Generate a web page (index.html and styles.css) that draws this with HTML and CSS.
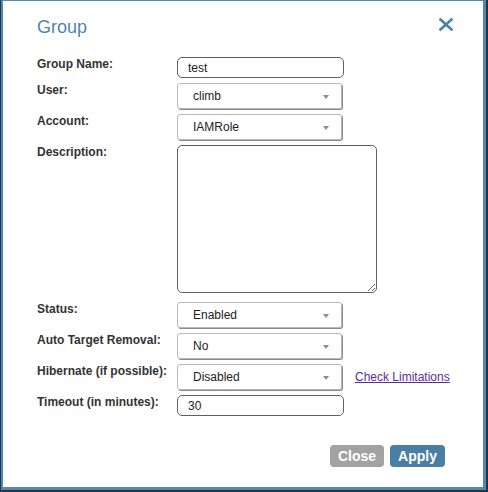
FILE: index.html
```html
<!DOCTYPE html>
<html>
<head>
<meta charset="utf-8">
<link rel="stylesheet" href="styles.css">
</head>
<body>
<div class="dialog">
  <div class="header">
    <h1 class="title">Group</h1>
    <span class="close-x" aria-label="Close">
      <svg width="14" height="13" viewBox="0 0 14 13"><path d="M1.5 1.5 L12.5 11.5 M12.5 1.5 L1.5 11.5" stroke="#4a84ab" stroke-width="2.6" stroke-linecap="square" fill="none"/></svg>
    </span>
  </div>
  <div class="form">
    <div class="row">
      <label class="label">Group Name:</label>
      <input class="text-input" type="text" value="test">
    </div>
    <div class="row">
      <label class="label">User:</label>
      <div class="select"><span class="select-value">climb</span><span class="arrow"></span></div>
    </div>
    <div class="row">
      <label class="label">Account:</label>
      <div class="select"><span class="select-value">IAMRole</span><span class="arrow"></span></div>
    </div>
    <div class="row row-desc">
      <label class="label">Description:</label>
      <textarea class="textarea"></textarea>
    </div>
    <div class="row">
      <label class="label">Status:</label>
      <div class="select"><span class="select-value">Enabled</span><span class="arrow"></span></div>
    </div>
    <div class="row">
      <label class="label">Auto Target Removal:</label>
      <div class="select"><span class="select-value">No</span><span class="arrow"></span></div>
    </div>
    <div class="row">
      <label class="label">Hibernate (if possible):</label>
      <div class="select"><span class="select-value">Disabled</span><span class="arrow"></span></div>
      <a class="link" href="#">Check Limitations</a>
    </div>
    <div class="row">
      <label class="label">Timeout (in minutes):</label>
      <input class="text-input" type="text" value="30">
    </div>
  </div>
  <div class="footer">
    <button class="btn btn-close">Close</button>
    <button class="btn btn-apply">Apply</button>
  </div>
</div>
</body>
</html>
```

FILE: styles.css
```css
html, body {
  margin: 0;
  padding: 0;
}
body {
  background: #2a3339;
  font-family: "Liberation Sans", Arial, sans-serif;
  width: 488px;
  height: 492px;
  overflow: hidden;
}
.dialog {
  box-sizing: border-box;
  width: 485px;
  height: 490px;
  margin-left: 1px;
  background: #fff;
  border-style: solid;
  border-color: #4b89b6;
  border-width: 1px 3px 3px 2px;
  padding: 16px 0 0 34px;
  display: flex;
  flex-direction: column;
}
.header {
  display: flex;
  justify-content: space-between;
  align-items: flex-start;
  padding-right: 30px;
}
.title {
  margin: 0;
  font-size: 18px;
  font-weight: normal;
  line-height: 21px;
  color: #4d86ae;
}
.close-x {
  display: block;
  margin-top: 1px;
  width: 14px;
  height: 13px;
}
.close-x svg {
  display: block;
}
.form {
  margin-top: 19px;
  display: flex;
  flex-direction: column;
}
.row {
  display: flex;
  align-items: flex-start;
  margin-bottom: 5px;
}
.row-desc {
  margin-bottom: 9px;
}
.label {
  width: 140px;
  flex: none;
  font-size: 12px;
  font-weight: bold;
  line-height: 14px;
  color: #333;
}
.text-input {
  box-sizing: border-box;
  width: 167px;
  height: 21px;
  margin: 0;
  border: 1px solid #606060;
  border-radius: 5px;
  padding: 0 10px;
  font-family: "Liberation Sans", Arial, sans-serif;
  font-size: 12px;
  color: #222;
  outline: none;
}
.select {
  box-sizing: border-box;
  width: 165px;
  height: 26px;
  border: 1px solid #b8b8b8;
  border-radius: 3px;
  box-shadow: 1px 1px 0 #8a8a8a;
  display: flex;
  align-items: center;
  justify-content: space-between;
  padding: 0 12px 0 15px;
  font-size: 12px;
  color: #222;
}
.arrow {
  width: 0;
  height: 0;
  border-left: 3.5px solid transparent;
  border-right: 3.5px solid transparent;
  border-top: 4px solid #8c8c8c;
  margin-top: 1px;
}
.textarea {
  box-sizing: border-box;
  width: 200px;
  height: 148px;
  margin: 0;
  border: 1px solid #606060;
  border-radius: 5px;
  font-family: "Liberation Sans", Arial, sans-serif;
  font-size: 12px;
  outline: none;
}
.link {
  align-self: center;
  margin-left: 13px;
  font-size: 12px;
  color: #5e2b9c;
  text-decoration: underline;
}
.footer {
  margin-top: 24px;
  display: flex;
  justify-content: flex-end;
  gap: 6px;
  padding-right: 38px;
}
.btn {
  height: 22px;
  border: none;
  border-radius: 4px;
  padding: 0 8px;
  margin: 0;
  font-family: "Liberation Sans", Arial, sans-serif;
  font-size: 14px;
  font-weight: bold;
  color: #fff;
  line-height: 22px;
}
.btn-close {
  background: #a2a2a2;
}
.btn-apply {
  background: #4a7fa4;
}
```
